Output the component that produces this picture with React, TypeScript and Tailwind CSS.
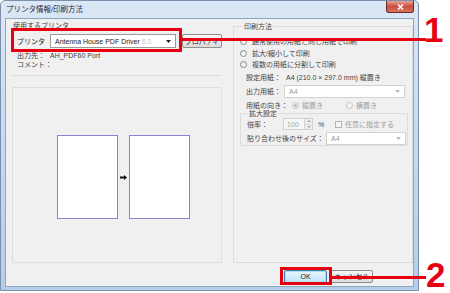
const Radio = ({ on = false, disabled = false }: { on?: boolean; disabled?: boolean }) => (
  <span
    className={`w-[7px] h-[7px] rounded-full border flex items-center justify-center shrink-0 ${
      disabled ? "border-[#c4c4c4] bg-[#f4f4f4]" : "border-[#8a8a8a] bg-gradient-to-br from-[#e4e4e4] to-white"
    }`}
  >
    {on && <span className="w-[3px] h-[3px] rounded-full bg-[#b0b0b0]" />}
  </span>
);

const Select = ({ value, w, disabled = false }: { value: string; w: string; disabled?: boolean }) => (
  <div
    className={`${w} h-[13px] flex items-center justify-between bg-white border ${
      disabled ? "border-[#d2d2d2] text-[#9a9a9a]" : "border-[#9a9a9a] text-[#222]"
    } pl-[4px] pr-[4px]`}
  >
    <span>{value}</span>
    <svg width="5" height="3" viewBox="0 0 5 3">
      <path d="M0 0h5L2.5 3z" fill={disabled ? "#b8b8b8" : "#222"} />
    </svg>
  </div>
);

export default function App() {
  return (
    <div className="relative w-[450px] h-[293px] bg-white overflow-hidden text-[7px] leading-none text-[#222] whitespace-nowrap font-['Liberation_Sans','Noto_Sans_CJK_JP',sans-serif]">
      {/* window */}
      <div className="w-[419px] h-[291px] flex flex-col rounded-t-[5px] border border-[#7b90ad] bg-gradient-to-b from-[#dbe7f5] via-[#c6daf0] to-[#b5cde9] px-[4px] pb-[3px]">
        <div className="h-[17px] flex items-start justify-between">
          <span className="pt-[5px] pl-[1px] text-[7.5px] text-[#1e2a3a]">プリンタ情報/印刷方法</span>
          <div className="w-[28px] h-[12px] rounded-b-[3px] border border-t-0 border-[#6b2b25] bg-gradient-to-b from-[#e6a394] via-[#c9503e] to-[#d8735f] flex items-center justify-center">
            <svg width="7" height="6" viewBox="0 0 7 6">
              <path d="M1 0.5l5 5M6 0.5l-5 5" stroke="white" strokeWidth="1.6" />
            </svg>
          </div>
        </div>

        {/* client area */}
        <div className="flex-1 flex flex-col bg-[#f0f0f0] border border-[#8fa4c0] pl-[6px] pr-[1px] pt-[1px]">
          <div className="h-[244px] flex gap-[11px]">
            {/* left column */}
            <div className="w-[210px] flex flex-col">
              <div className="h-[56px] flex flex-col border-b border-[#dcdcdc]">
                <span className="pt-[2px] pl-[1px] text-[#444]">使用するプリンタ</span>
                <div className="mt-[5px] h-[14px] flex items-center">
                  <span className="w-[38px] pl-[5px]">プリンタ</span>
                  <div className="w-[126px] h-[14px] flex items-center justify-between bg-white border border-[#9a9a9a] pl-[4px] pr-[4px]">
                    <span>
                      Antenna House PDF Driver <span className="text-[#c8c8c8]">6.0</span>
                    </span>
                    <svg width="5" height="3" viewBox="0 0 5 3">
                      <path d="M0 0h5L2.5 3z" fill="#222" />
                    </svg>
                  </div>
                  <div className="ml-[6px] w-[40px] h-[14px] flex items-center justify-center overflow-hidden rounded-[2px] border border-[#8e8e8e] bg-gradient-to-b from-[#f6f6f6] to-[#dcdcdc]">
                    プロパティ
                  </div>
                </div>
                <div className="mt-[4px] flex">
                  <span className="w-[38px] pl-[5px] text-[#444]">出力先：</span>
                  <span className="text-[#444]">AH_PDF60 Port</span>
                </div>
                <div className="mt-[2px] flex">
                  <span className="pl-[5px] text-[#444]">コメント：</span>
                </div>
              </div>
              <div className="mt-[11px] h-[176px] border border-[#dedede] flex items-start pl-[44px] pt-[47px]">
                <div className="w-[61px] h-[84px] bg-white border border-[#8a82d4]" />
                <div className="w-[11px] h-[84px] flex items-center justify-center">
                  <svg width="7" height="5" viewBox="0 0 7 5">
                    <path d="M0 1.5h4V0l3 2.5L4 5V3.5H0z" fill="#111" />
                  </svg>
                </div>
                <div className="w-[61px] h-[84px] bg-white border border-[#8a82d4]" />
              </div>
            </div>

            {/* right column */}
            <fieldset className="w-[179px] h-[240px] mt-[3px] border border-[#dcdcdc] pl-[6px] pr-[4px]">
              <legend className="ml-[3px] px-[1px] text-[#444]">印刷方法</legend>
              <div className="flex flex-col text-[#444]">
                <div className="mt-[7px] h-[8px] flex items-center gap-[5px]">
                  <Radio />
                  <span>通常使用の用紙と同じ用紙で印刷</span>
                </div>
                <div className="mt-[4px] h-[8px] flex items-center gap-[5px]">
                  <Radio />
                  <span>拡大/縮小して印刷</span>
                </div>
                <div className="mt-[3px] h-[8px] flex items-center gap-[5px]">
                  <Radio />
                  <span>複数の用紙に分割して印刷</span>
                </div>
                <div className="mt-[5px] h-[8px] flex items-center pl-[6px]">
                  <span className="w-[40px]">設定用紙：</span>
                  <span>A4 (210.0 × 297.0 mm) 縦置き</span>
                </div>
                <div className="mt-[4px] h-[13px] flex items-center pl-[6px]">
                  <span className="w-[38px]">出力用紙：</span>
                  <Select value="A4" w="w-[121px]" disabled />
                </div>
                <div className="mt-[3px] h-[8px] flex items-center pl-[6px]">
                  <span className="w-[46px]">用紙の向き：</span>
                  <Radio on disabled />
                  <span className="ml-[3px] w-[44px] text-[#a0a0a0]">縦置き</span>
                  <Radio disabled />
                  <span className="ml-[3px] text-[#a0a0a0]">横置き</span>
                </div>
                <fieldset className="mt-[1px] w-[168px] h-[36px] border border-[#dcdcdc] pl-[6px]">
                  <legend className="ml-[1px] px-[1px]">拡大設定</legend>
                  <div className="mt-[1px] h-[12px] flex items-center">
                    <span className="w-[36px]">倍率：</span>
                    <div className="w-[22px] h-[12px] flex items-center bg-[#f7f7f7] border border-[#d0d0d0] pl-[3px] text-[#a8a8a8]">
                      100
                    </div>
                    <div className="w-[8px] h-[12px] flex flex-col border border-l-0 border-[#d0d0d0]">
                      <div className="flex-1 flex items-center justify-center border-b border-[#d8d8d8]">
                        <svg width="4" height="2" viewBox="0 0 4 2">
                          <path d="M0 2h4L2 0z" fill="#aaa" />
                        </svg>
                      </div>
                      <div className="flex-1 flex items-center justify-center">
                        <svg width="4" height="2" viewBox="0 0 4 2">
                          <path d="M0 0h4L2 2z" fill="#aaa" />
                        </svg>
                      </div>
                    </div>
                    <span className="ml-[5px] w-[17px]">%</span>
                    <span className="w-[7px] h-[7px] border border-[#b4b4b4] bg-[#f6f6f6]" />
                    <span className="ml-[3px] text-[#a0a0a0]">任意に指定する</span>
                  </div>
                  <div className="mt-[2px] h-[13px] flex items-center">
                    <span className="w-[79px]">貼り合わせ後のサイズ：</span>
                    <Select value="A4" w="w-[80px]" disabled />
                  </div>
                </fieldset>
              </div>
            </fieldset>
          </div>

          {/* buttons */}
          <div className="mt-[6px] flex justify-end gap-[4px] pr-[39px]">
            <div className="w-[43px] h-[13px] flex items-center justify-center rounded-[2px] border border-[#3c7fb1] bg-gradient-to-b from-[#eaf6fd] to-[#bee6fd] shadow-[inset_0_0_0_1px_#aedcf5]">
              OK
            </div>
            <div className="w-[42px] h-[13px] flex items-center justify-center rounded-[2px] border border-[#8e8e8e] bg-gradient-to-b from-[#f6f6f6] to-[#dcdcdc]">
              キャンセル
            </div>
          </div>
        </div>
      </div>

      {/* annotations */}
      <div className="absolute left-[11px] top-[28px] w-[171px] h-[24px] border-[3px] border-[#e60012]" />
      <div className="absolute left-[182px] top-[38px] w-[244px] h-[3px] bg-[#e60012]" />
      <span className="absolute left-[424px] top-[12px] text-[35px] font-bold text-[#e60012] font-['Liberation_Sans',sans-serif]">1</span>
      <div className="absolute left-[280px] top-[267px] w-[52px] h-[18px] border-[3px] border-[#e60012]" />
      <div className="absolute left-[332px] top-[276px] w-[94px] h-[3px] bg-[#e60012]" />
      <span className="absolute left-[426px] top-[257px] text-[35px] font-bold text-[#e60012] font-['Liberation_Sans',sans-serif]">2</span>
    </div>
  );
}
